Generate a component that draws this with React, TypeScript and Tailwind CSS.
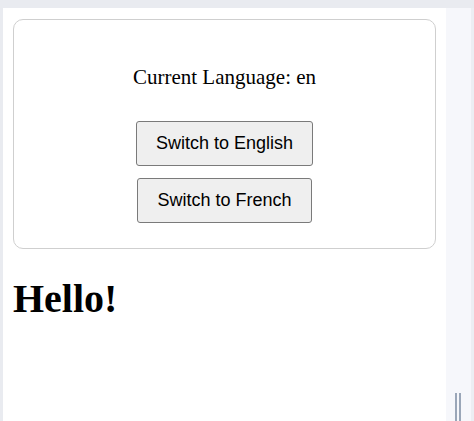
import { useState } from "react";

export default function App() {
  const [lang, setLang] = useState("en");

  return (
    <div className="flex h-[421px] w-[474px] overflow-hidden bg-[#e9ebf0] pt-[8px] pl-[3px]">
      <div className="flex w-[443px] flex-col bg-white px-[10px] pt-[11px] font-['Liberation_Serif',serif] text-black">
        <div className="flex flex-col items-center rounded-[10px] border border-[#cfcfcf] pt-[45px] pb-[25px]">
          <p className="text-[21px] leading-[24px]">Current Language: {lang}</p>
          <div className="mt-[32px] flex flex-col items-center gap-[12px] font-['Liberation_Sans',Arial,sans-serif]">
            <button
              onClick={() => setLang("en")}
              className="rounded-[3px] border border-[#7a7a7a] bg-[#efefef] px-[19px] py-[11px] text-[18px] leading-[21px] text-black"
            >
              Switch to English
            </button>
            <button
              onClick={() => setLang("fr")}
              className="rounded-[3px] border border-[#7a7a7a] bg-[#efefef] px-[19px] py-[11px] text-[18px] leading-[21px] text-black"
            >
              Switch to French
            </button>
          </div>
        </div>
        <h1 className="mt-[27px] text-[40px] leading-[46px] font-bold">
          {lang === "fr" ? "Bonjour!" : "Hello!"}
        </h1>
      </div>
      <div className="relative w-[25px] bg-[#f6f7fb]">
        <div className="absolute bottom-0 left-[9px] flex h-[28px] gap-[2px]">
          <span className="w-[2px] bg-[#9aa6b8]" />
          <span className="w-[2px] bg-[#9aa6b8]" />
        </div>
      </div>
      <div className="w-[3px] bg-[#eceef3]" />
    </div>
  );
}
